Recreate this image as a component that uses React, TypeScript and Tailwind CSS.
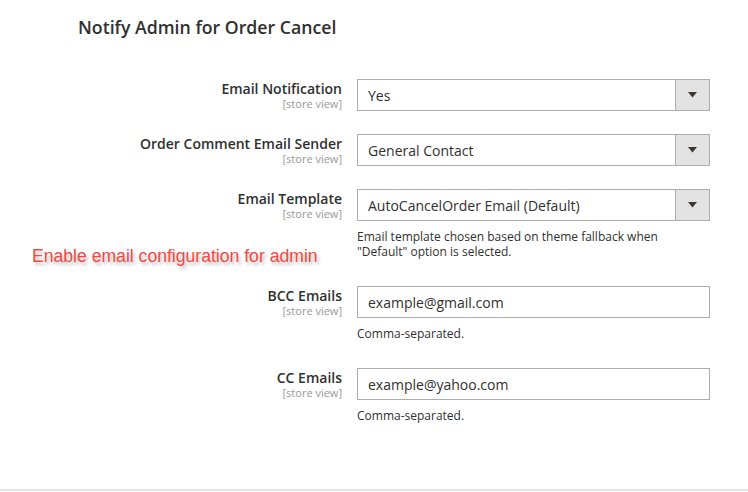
import React from "react";

const font = { fontFamily: '"Open Sans", "Noto Sans", sans-serif' };

function Label({ text }: { text: string }) {
  return (
    <div className="w-[342px] shrink-0 text-right pt-[1px]">
      <div className="text-[14px] leading-[18px] font-semibold text-[#303030]">{text}</div>
      <div className="text-[11px] leading-[12px] text-[#999999]">[store view]</div>
    </div>
  );
}

function Select({ value }: { value: string }) {
  return (
    <div className="flex h-[32px] w-[353px] border border-[#adadad] bg-white">
      <div className="flex-1 flex items-center pl-[10px] text-[14px] text-[#303030]">{value}</div>
      <div className="w-[34px] border-l border-[#adadad] bg-[#e3e3e3] flex items-center justify-center">
        <svg width="9" height="6" viewBox="0 0 9 6">
          <path d="M0 0 H9 L4.5 5.5 Z" fill="#41362f" />
        </svg>
      </div>
    </div>
  );
}

function Input({ value }: { value: string }) {
  return (
    <div className="flex items-center h-[32px] w-[353px] border border-[#adadad] bg-white pl-[10px] text-[14px] text-[#303030]">
      {value}
    </div>
  );
}

function Note({ children }: { children: React.ReactNode }) {
  return <div className="mt-[8px] text-[12px] leading-[15px] text-[#303030] w-[320px]">{children}</div>;
}

export default function App() {
  return (
    <div className="relative w-[748px] h-[492px] bg-white overflow-hidden" style={font}>
      <div className="pl-[78px] pt-[15px] text-[17.7px] leading-[24px] font-semibold text-[#303030]">
        Notify Admin for Order Cancel
      </div>
      <div className="mt-[40px] flex flex-col">
        <div className="flex gap-[15px]">
          <Label text="Email Notification" />
          <Select value="Yes" />
        </div>
        <div className="flex gap-[15px] mt-[23px]">
          <Label text="Order Comment Email Sender" />
          <Select value="General Contact" />
        </div>
        <div className="flex gap-[15px] mt-[23px]">
          <Label text="Email Template" />
          <div>
            <Select value="AutoCancelOrder Email (Default)" />
            <Note>
              Email template chosen based on theme fallback when "Default" option is selected.
            </Note>
          </div>
        </div>
        <div className="flex gap-[15px] mt-[27px]">
          <Label text="BCC Emails" />
          <div>
            <Input value="example@gmail.com" />
            <Note>Comma-separated.</Note>
          </div>
        </div>
        <div className="flex gap-[15px] mt-[27px]">
          <Label text="CC Emails" />
          <div>
            <Input value="example@yahoo.com" />
            <Note>Comma-separated.</Note>
          </div>
        </div>
      </div>
      <div className="absolute left-0 right-0 top-[489px] h-[2px] bg-[#e3e3e3]" />
      <div
        className="absolute left-[32px] top-[245px] text-[17.6px] leading-[22px] text-[#f04a43]"
        style={{ fontFamily: '"Liberation Sans", Arial, sans-serif', textShadow: "2px 3px 3px rgba(0,0,0,0.25)" }}
      >
        Enable email configuration for admin
      </div>
    </div>
  );
}
